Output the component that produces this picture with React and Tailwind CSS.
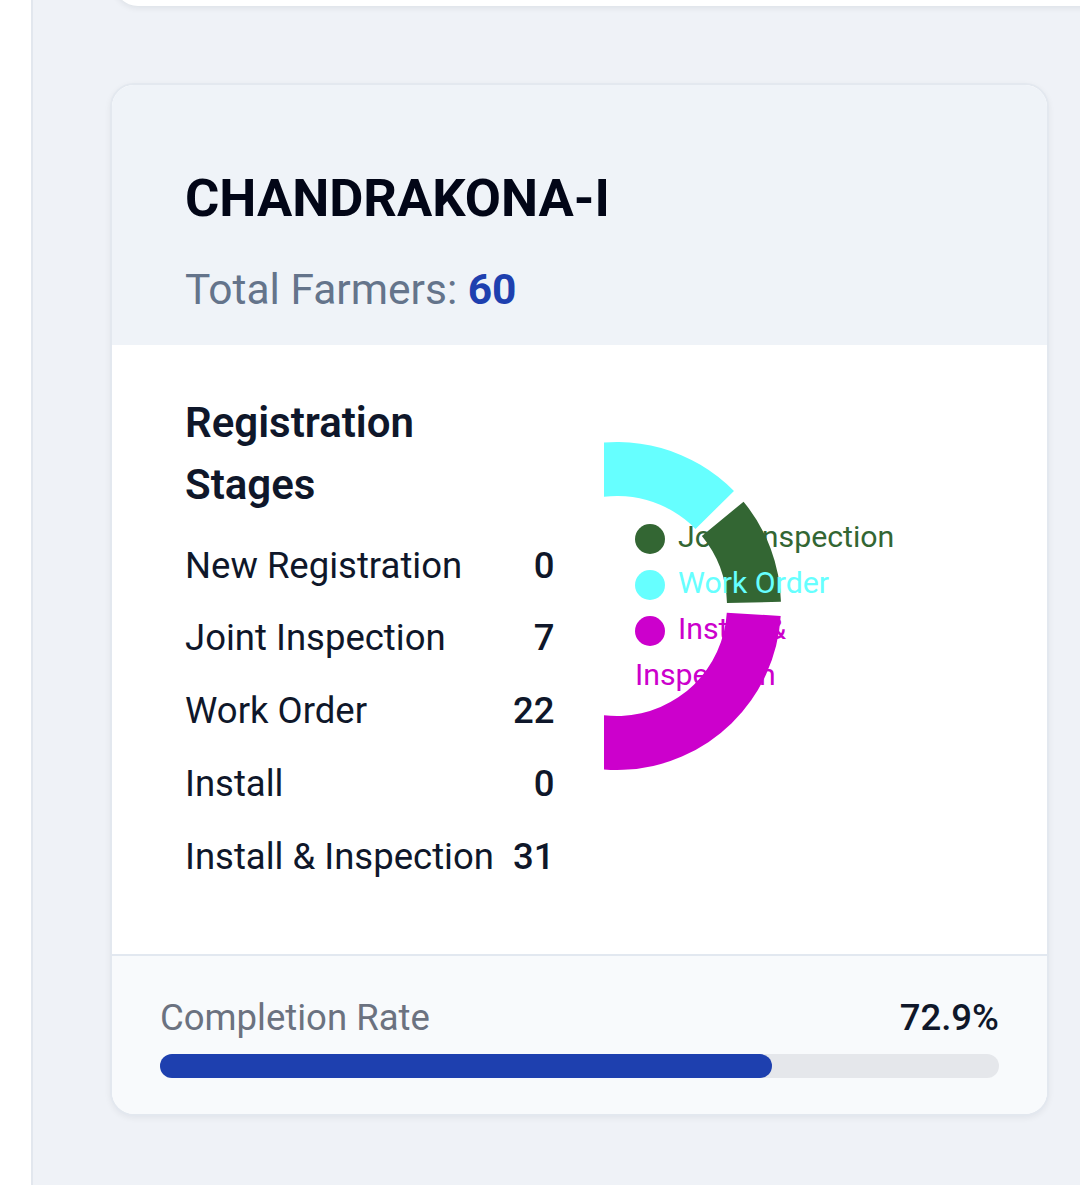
const STAGES = [
  { name: "New Registration", value: 0 },
  { name: "Joint Inspection", value: 7 },
  { name: "Work Order", value: 22 },
  { name: "Install", value: 0 },
  { name: "Install & Inspection", value: 31 },
];

// angles in degrees, counter-clockwise from 3 o'clock
const SLICES = [
  { name: "Joint Inspection", color: "#336633", from: 1.5, to: 39.5 },
  { name: "Work Order", color: "#66ffff", from: 44.5, to: 164 },
  { name: "Install & Inspection", color: "#cc00cc", from: 188, to: 356.5 },
];

const CX = 13;
const CY = 170;
const R_OUT = 164;
const R_IN = 110;

function pt(r, deg) {
  const a = (deg * Math.PI) / 180;
  return [CX + r * Math.cos(a), CY - r * Math.sin(a)];
}

function arcPath(from, to) {
  const large = to - from > 180 ? 1 : 0;
  const [x1, y1] = pt(R_OUT, from);
  const [x2, y2] = pt(R_OUT, to);
  const [x3, y3] = pt(R_IN, to);
  const [x4, y4] = pt(R_IN, from);
  return `M${x1} ${y1} A${R_OUT} ${R_OUT} 0 ${large} 0 ${x2} ${y2} L${x3} ${y3} A${R_IN} ${R_IN} 0 ${large} 1 ${x4} ${y4} Z`;
}

function StageChart() {
  return (
    <div className="relative ml-[47px] mt-[44px] h-[340px] w-[320px]">
      <svg width="200" height="340" className="block">
        {SLICES.map((s) => (
          <path key={s.name} d={arcPath(s.from, s.to)} fill={s.color} />
        ))}
      </svg>
      <div className="absolute left-[31px] top-[78px] w-[272px] text-[30.3px] leading-[46px]">
        {SLICES.map((s) => (
          <div key={s.name} style={{ color: s.color }}>
            <span
              className="mr-[13px] inline-block h-[30px] w-[30px] rounded-full align-middle"
              style={{ backgroundColor: s.color }}
            />
            {s.name}
          </div>
        ))}
      </div>
    </div>
  );
}

export default function App() {
  const total = STAGES.reduce((n, s) => n + s.value, 0);
  const rate = 72.9;

  return (
    <div className="flex h-[1185px] overflow-hidden bg-[#eff2f7] font-['Roboto',sans-serif]">
      <div className="w-[33px] shrink-0 border-r-2 border-[#e2e7ee] bg-white" />

      <div className="flex flex-1 flex-col">
        <div className="-mr-[40px] -mt-[34px] ml-[81px] h-[40px] rounded-b-[24px] bg-white shadow-[0_2px_6px_rgba(15,23,42,0.08)]" />

        <div className="ml-[77px] mt-[77px] w-[939px] overflow-hidden rounded-[24px] border-2 border-[#e3e8ef] bg-white shadow-[0_2px_6px_rgba(15,23,42,0.06)]">
          <div className="bg-[#eff3f8] pb-[25px] pl-[73px] pt-[82px]">
            <h2 className="text-[52.5px] font-bold leading-[1.2] text-[#020617]">CHANDRAKONA-I</h2>
            <p className="mt-[30px] text-[42.5px] leading-[1.4] text-[#64748b]">
              Total Farmers: <span className="font-bold text-[#1e40af]">{total}</span>
            </p>
          </div>

          <div className="flex h-[609px] items-start pl-[73px] pt-[47px]">
            <div className="w-[372px] shrink-0">
              <h3 className="text-[42px] font-semibold leading-[62px] text-[#0f172a]">
                Registration
                <br />
                Stages
              </h3>
              <div className="mt-[14px] grid grid-cols-[auto_auto] justify-start gap-x-[19px] whitespace-nowrap text-[36.5px] leading-[72.75px] text-[#0f172a]">
                {STAGES.map((s) => (
                  <div key={s.name} className="contents">
                    <span>{s.name}</span>
                    <span className="text-right font-medium">{s.value}</span>
                  </div>
                ))}
              </div>
            </div>
            <StageChart />
          </div>

          <div className="border-t-2 border-[#e2e8f0] bg-[#f8fafc] px-[48px] pb-[36px] pt-[35px]">
            <div className="flex items-center justify-between text-[36.5px] leading-[54px]">
              <span className="text-[#6b7280]">Completion Rate</span>
              <span className="font-medium text-[#0f172a]">{rate}%</span>
            </div>
            <div className="mt-[9px] h-6 w-full rounded-full bg-[#e5e7eb]">
              <div className="h-6 rounded-full bg-[#1e40af]" style={{ width: `${rate}%` }} />
            </div>
          </div>
        </div>
      </div>
    </div>
  );
}
